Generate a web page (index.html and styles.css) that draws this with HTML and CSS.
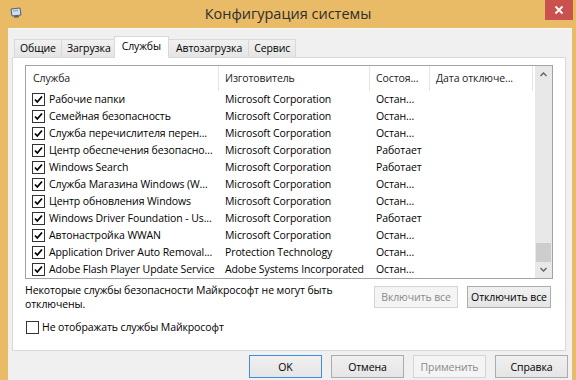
FILE: index.html
```html
<!DOCTYPE html>
<html lang="ru">
<head>
    <meta charset="UTF-8">
    <meta name="viewport" content="width=device-width, initial-scale=1.0">
    <title>Конфигурация системы</title>
    <link rel="stylesheet" href="styles.css">
</head>
<body>
    <div class="window">
        <div class="titlebar">
            <svg class="app-icon" width="12" height="12" viewBox="0 0 12 12">
                <path d="M1 2 L10 1 L11 8 L2 9 Z" fill="#cfe0f2" stroke="#55606e" stroke-width="1"/>
                <path d="M3 4 L8 3.5" stroke="#7d9ab8" stroke-width="1"/>
                <path d="M4 10 L9 9.5" stroke="#55606e" stroke-width="1.4"/>
            </svg>
            <div class="title">Конфигурация системы</div>
            <div class="close">
                <svg width="10" height="10" viewBox="0 0 10 10">
                    <path d="M1.5 1.5 L8.5 8.5 M8.5 1.5 L1.5 8.5" stroke="#fff" stroke-width="1.8"/>
                </svg>
            </div>
        </div>

        <div class="client">
            <div class="tabs">
                <div class="tab">Общие</div>
                <div class="tab">Загрузка</div>
                <div class="tab active">Службы</div>
                <div class="tab">Автозагрузка</div>
                <div class="tab">Сервис</div>
            </div>

            <div class="panel">
                <div class="list">
                    <div class="list-body">
                        <div class="row header">
                            <div class="cell first">Служба</div>
                            <div class="cell">Изготовитель</div>
                            <div class="cell">Состоя...</div>
                            <div class="cell">Дата отключе...</div>
                        </div>
                        <div class="row"><div class="cell first"><span class="check"></span>Рабочие папки</div><div class="cell">Microsoft Corporation</div><div class="cell">Остан...</div><div class="cell"></div></div>
                        <div class="row"><div class="cell first"><span class="check"></span>Семейная безопасность</div><div class="cell">Microsoft Corporation</div><div class="cell">Остан...</div><div class="cell"></div></div>
                        <div class="row"><div class="cell first"><span class="check"></span>Служба перечислителя перен...</div><div class="cell">Microsoft Corporation</div><div class="cell">Остан...</div><div class="cell"></div></div>
                        <div class="row"><div class="cell first"><span class="check"></span>Центр обеспечения безопасно...</div><div class="cell">Microsoft Corporation</div><div class="cell">Работает</div><div class="cell"></div></div>
                        <div class="row"><div class="cell first"><span class="check"></span>Windows Search</div><div class="cell">Microsoft Corporation</div><div class="cell">Работает</div><div class="cell"></div></div>
                        <div class="row"><div class="cell first"><span class="check"></span>Служба Магазина Windows (W...</div><div class="cell">Microsoft Corporation</div><div class="cell">Остан...</div><div class="cell"></div></div>
                        <div class="row"><div class="cell first"><span class="check"></span>Центр обновления Windows</div><div class="cell">Microsoft Corporation</div><div class="cell">Остан...</div><div class="cell"></div></div>
                        <div class="row"><div class="cell first"><span class="check"></span>Windows Driver Foundation - Us...</div><div class="cell">Microsoft Corporation</div><div class="cell">Работает</div><div class="cell"></div></div>
                        <div class="row"><div class="cell first"><span class="check"></span>Автонастройка WWAN</div><div class="cell">Microsoft Corporation</div><div class="cell">Остан...</div><div class="cell"></div></div>
                        <div class="row"><div class="cell first"><span class="check"></span>Application Driver Auto Removal...</div><div class="cell">Protection Technology</div><div class="cell">Остан...</div><div class="cell"></div></div>
                        <div class="row"><div class="cell first"><span class="check"></span>Adobe Flash Player Update Service</div><div class="cell">Adobe Systems Incorporated</div><div class="cell">Остан...</div><div class="cell"></div></div>
                    </div>
                    <div class="scrollbar">
                        <div class="arrow">
                            <svg width="7" height="5" viewBox="0 0 7 5"><path d="M0.5 4 L3.5 1 L6.5 4" fill="none" stroke="#606060" stroke-width="1.3"/></svg>
                        </div>
                        <div class="track"><div class="thumb"></div></div>
                        <div class="arrow">
                            <svg width="7" height="5" viewBox="0 0 7 5"><path d="M0.5 1 L3.5 4 L6.5 1" fill="none" stroke="#606060" stroke-width="1.3"/></svg>
                        </div>
                    </div>
                </div>

                <div class="footer">
                    <p class="note">Некоторые службы безопасности Майкрософт не могут быть отключены.</p>
                    <button class="btn" disabled>Включить все</button>
                    <button class="btn">Отключить все</button>
                </div>

                <label class="hide-ms"><span class="box"></span>Не отображать службы Майкрософт</label>
            </div>

            <div class="dialog-buttons">
                <button class="btn default">OK</button>
                <button class="btn">Отмена</button>
                <button class="btn" disabled>Применить</button>
                <button class="btn">Справка</button>
            </div>
        </div>
    </div>
</body>
</html>
```

FILE: styles.css
```css
body {
    margin: 0;
    height: 380px;
    overflow: hidden;
    background-color: #e9bb66;
    font-family: "Open Sans", "Noto Sans", sans-serif;
    font-size: 10.5px;
    letter-spacing: -0.1px;
    color: #000;
}
.window {
    display: flex;
    flex-direction: column;
    height: 380px;
}

/* Title bar */
.titlebar {
    height: 28px;
    display: grid;
    grid-template-columns: 1fr auto 1fr;
    align-items: center;
}
.app-icon {
    margin-left: 10px;
    margin-top: -3px;
}
.title {
    font-size: 14.5px;
    letter-spacing: 0;
    color: #2e2e2e;
    margin-top: -1px;
}
.close {
    justify-self: end;
    align-self: start;
    width: 28px;
    height: 20px;
    margin-right: 3px;
    background-color: #c9524f;
    display: flex;
    align-items: center;
    justify-content: center;
}

/* Client area */
.client {
    flex: 1;
    margin: 0 4px 0 8px;
    padding: 7px 6px 0 4px;
    background-color: #f0f0f0;
    border-top: 1px solid #fbf8f0;
}
.tabs {
    display: flex;
    align-items: flex-end;
    height: 21px;
    padding-left: 2px;
    position: relative;
    z-index: 1;
}
.tab {
    height: 17px;
    line-height: 17px;
    padding: 0 5px;
    border: 1px solid #d9d9d9;
    border-bottom: none;
    margin-right: -1px;
    background: linear-gradient(#f0f0f0, #e5e5e5);
    color: #000;
}
.tab.active {
    height: 21px;
    line-height: 19px;
    margin: 0 -1px -1px -2px;
    padding: 0 7px;
    background: #fff;
    position: relative;
    z-index: 2;
}
.tab:nth-child(4) {
    padding: 0 6px 0 7px;
}

/* Tab page */
.panel {
    height: 285px;
    background-color: #fff;
    border: 1px solid #d9d9d9;
    padding: 7px 12px 0 12px;
}
.list {
    display: flex;
    height: 212px;
    border: 1px solid #a3a3a3;
}
.list-body {
    flex: 1;
}
.row {
    display: grid;
    grid-template-columns: 193px 151px 60px 103px;
    height: 17px;
    line-height: 17px;
    white-space: nowrap;
}
.row.header {
    height: 25px;
    line-height: 25px;
    color: #222;
}
.row.header .cell {
    border-right: 1px solid #e5e5e5;
}
.cell {
    padding-left: 6px;
    overflow: hidden;
}
.cell.first {
    padding-left: 6px;
    display: flex;
    align-items: center;
}
.row.header .cell.first {
    padding-left: 7px;
}
.check {
    flex-shrink: 0;
    width: 11px;
    height: 11px;
    margin-right: 4px;
    border: 1px solid #333;
    background: #fff url("data:image/svg+xml;utf8,<svg xmlns='http://www.w3.org/2000/svg' width='11' height='11' viewBox='0 0 11 11'><path d='M2 5.5 L4.3 8 L9 2.5' fill='none' stroke='black' stroke-width='1.8'/></svg>") no-repeat center;
}

.scrollbar {
    width: 17px;
    display: flex;
    flex-direction: column;
    background-color: #e8e8e8;
}
.arrow {
    height: 17px;
    display: flex;
    align-items: center;
    justify-content: center;
}
.track {
    flex: 1;
    padding: 0 1px;
}
.thumb {
    height: 19px;
    margin-top: 160px;
    background-color: #cdcdcd;
}

.footer {
    display: flex;
    align-items: flex-start;
    margin-top: 4px;
}
.note {
    flex: 1;
    margin: 0;
    line-height: 14px;
}
.btn {
    height: 22px;
    padding: 0 3px;
    font-family: inherit;
    font-size: inherit;
    letter-spacing: inherit;
    color: #000;
    border: 1px solid #acacac;
    background: linear-gradient(#f0f0f0, #e5e5e5);
}
.btn:disabled {
    color: #8a8a8a;
    border-color: #d5d5d5;
    background: #f4f4f4;
}
.footer .btn {
    width: 84px;
    margin-top: 3px;
    margin-left: 9px;
}
.footer .btn:last-child {
    margin-right: 2px;
}

.hide-ms {
    display: flex;
    align-items: center;
    margin-top: 9px;
    margin-left: 1px;
}
.box {
    width: 11px;
    height: 11px;
    margin-right: 3px;
    border: 1px solid #333;
    background-color: #fff;
}

.dialog-buttons {
    display: flex;
    justify-content: flex-end;
    gap: 9px;
    margin: 4px -2px 0 0;
}
.dialog-buttons .btn {
    width: 73px;
    height: 23px;
}
.btn.default {
    border-color: #3c8ee0;
}
```
